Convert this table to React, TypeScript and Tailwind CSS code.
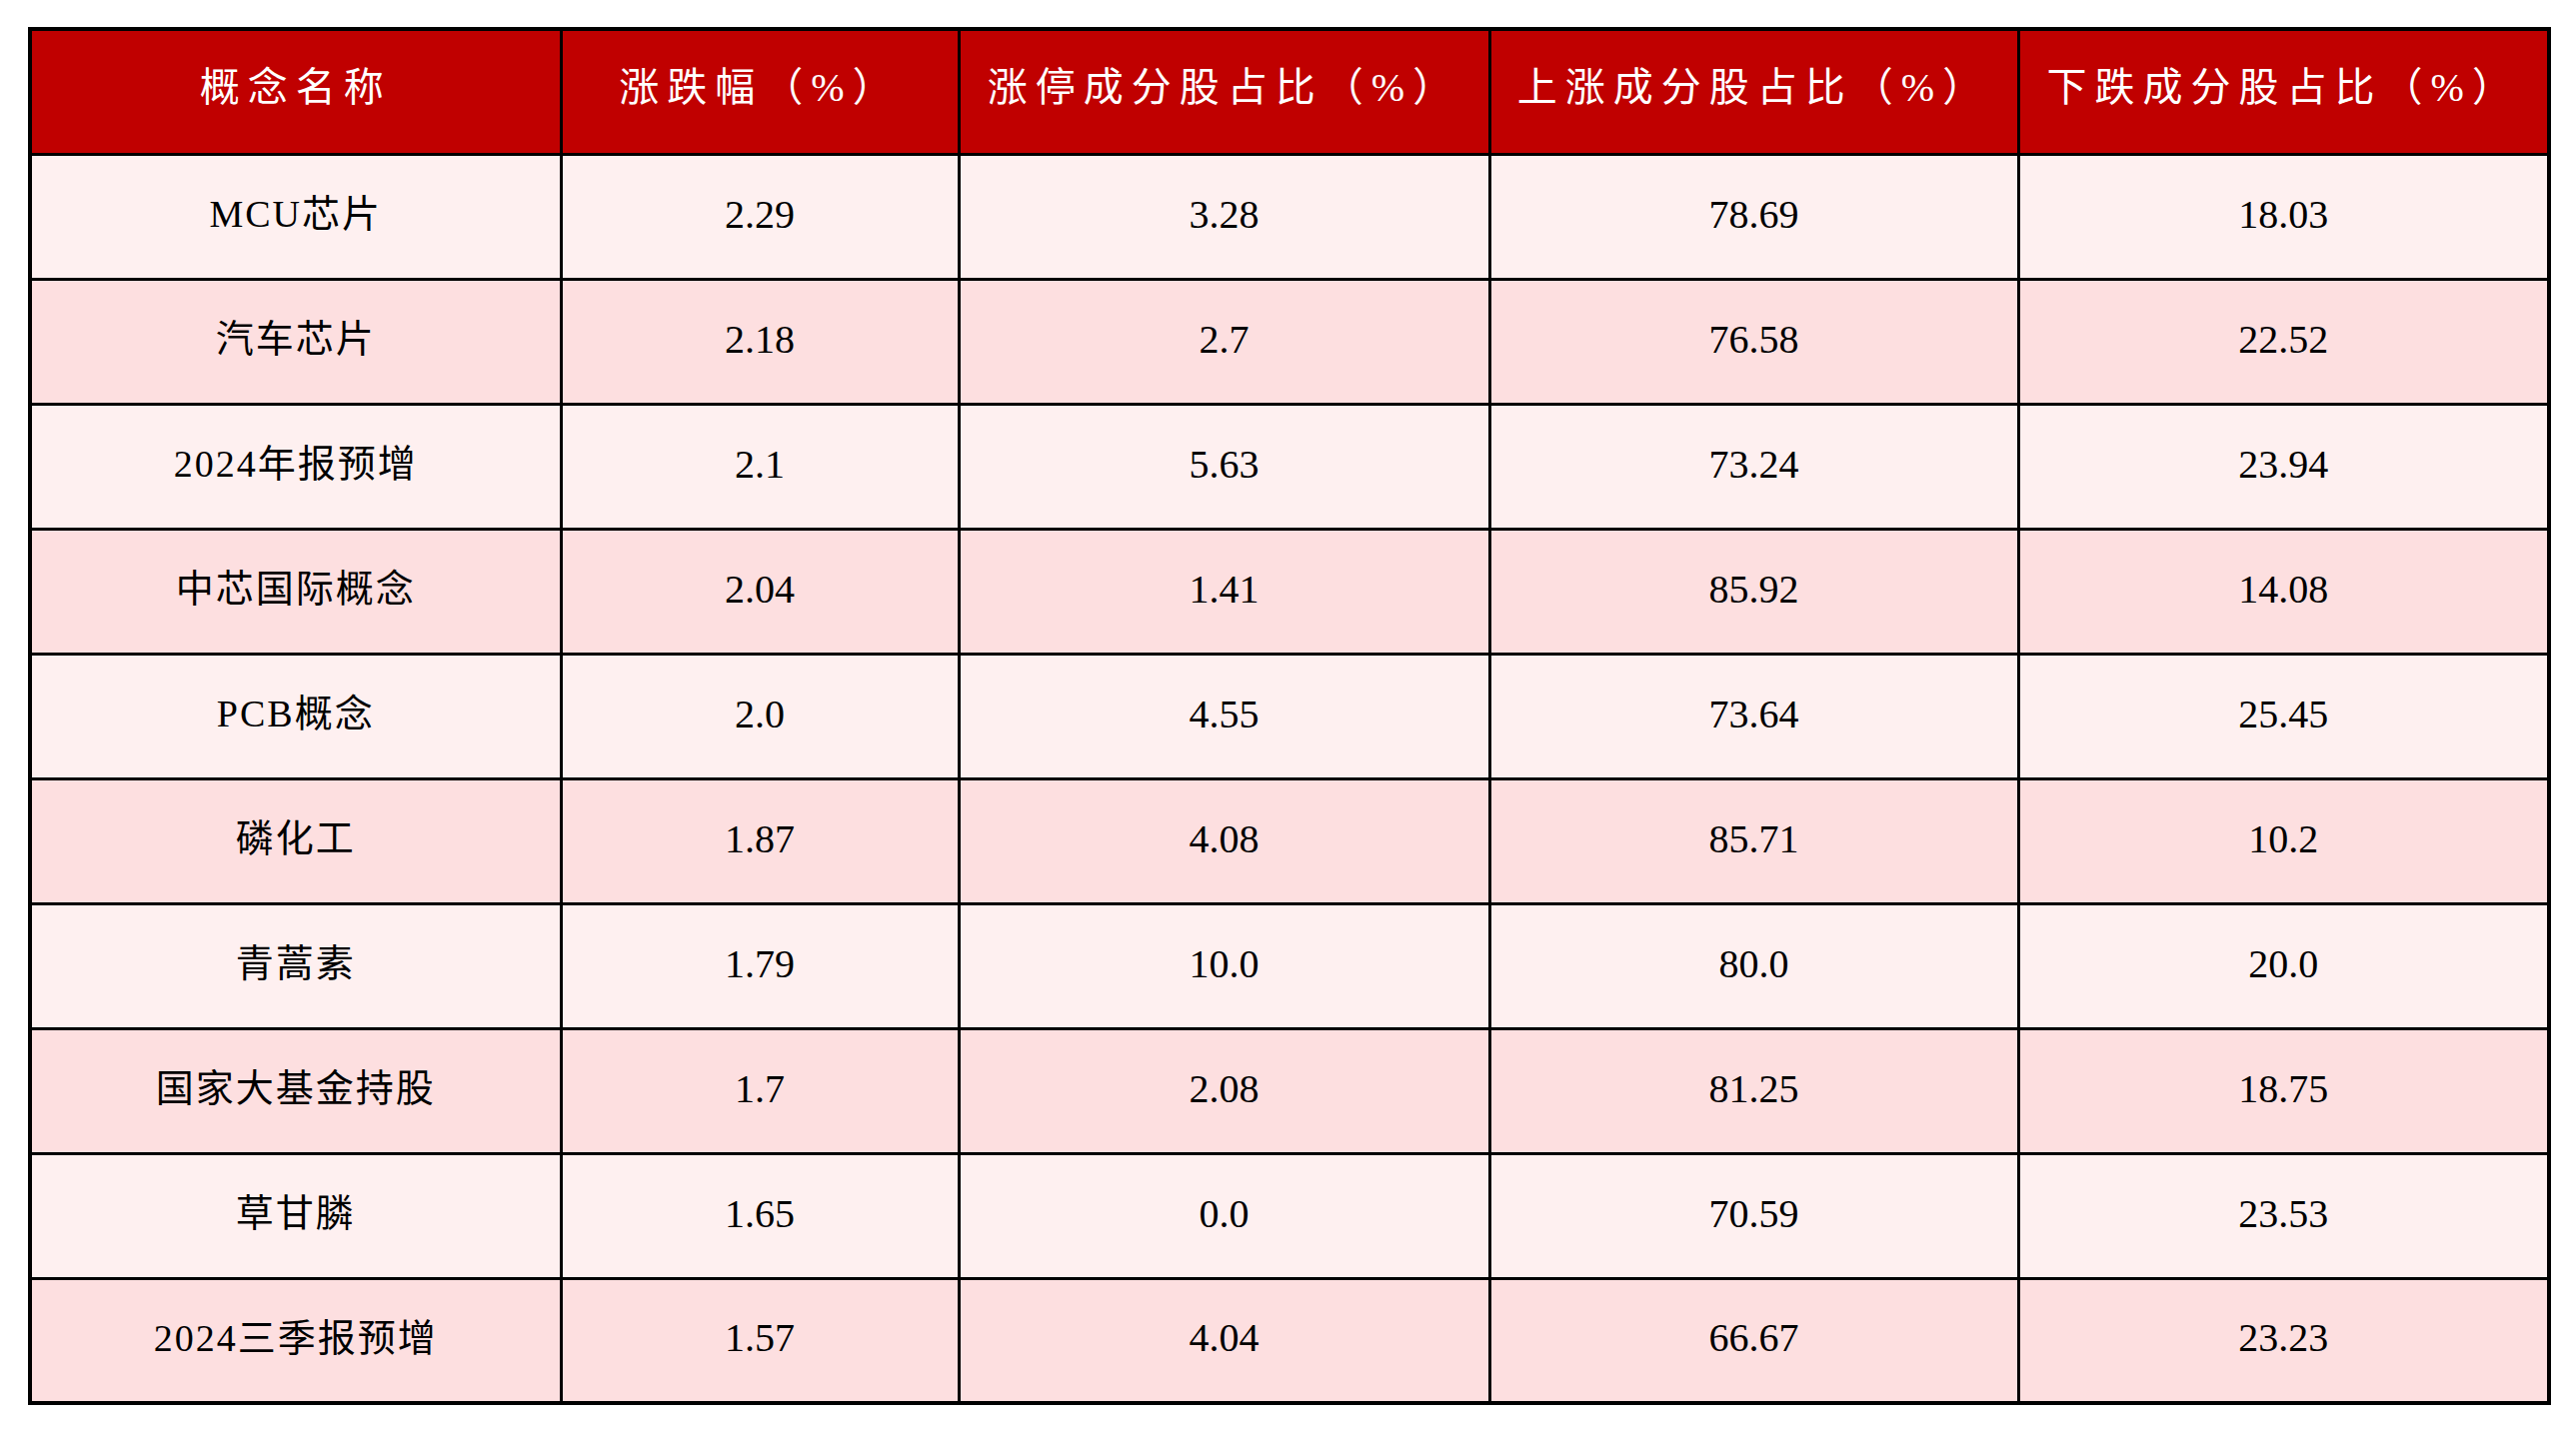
import React from "react";

const headers = [
  "概念名称",
  "涨跌幅（%）",
  "涨停成分股占比（%）",
  "上涨成分股占比（%）",
  "下跌成分股占比（%）",
];

const rows: string[][] = [
  ["MCU芯片", "2.29", "3.28", "78.69", "18.03"],
  ["汽车芯片", "2.18", "2.7", "76.58", "22.52"],
  ["2024年报预增", "2.1", "5.63", "73.24", "23.94"],
  ["中芯国际概念", "2.04", "1.41", "85.92", "14.08"],
  ["PCB概念", "2.0", "4.55", "73.64", "25.45"],
  ["磷化工", "1.87", "4.08", "85.71", "10.2"],
  ["青蒿素", "1.79", "10.0", "80.0", "20.0"],
  ["国家大基金持股", "1.7", "2.08", "81.25", "18.75"],
  ["草甘膦", "1.65", "0.0", "70.59", "23.53"],
  ["2024三季报预增", "1.57", "4.04", "66.67", "23.23"],
];

const widths = ["w-[531px]", "w-[398px]", "w-[531px]", "w-[529px]", "w-[531px]"];

export default function App() {
  return (
    <div
      className="min-h-screen bg-white pl-[28px] pt-[27px]"
      style={{ fontFamily: '"Liberation Serif", "Noto Sans CJK SC", serif' }}
    >
      <table className="border-collapse table-fixed border-[4px] border-black">
        <colgroup>
          {widths.map((w, i) => (
            <col key={i} className={w} />
          ))}
        </colgroup>
        <thead>
          <tr className="bg-[#c00000] h-[125px]">
            {headers.map((h, i) => (
              <th
                key={i}
                className="border-[3px] border-black text-white font-normal text-[40px] tracking-[8px] text-center align-middle p-0 pb-[8px]"
              >
                {h}
              </th>
            ))}
          </tr>
        </thead>
        <tbody>
          {rows.map((r, ri) => (
            <tr
              key={ri}
              className={
                ri % 2 === 0 ? "bg-[#fef0f0] h-[125px]" : "bg-[#fddfe0] h-[125px]"
              }
            >
              {r.map((c, ci) => (
                <td
                  key={ci}
                  className={
                    ci === 0
                      ? "border-[3px] border-black text-black text-[38px] tracking-[2px] text-center align-middle p-0 pb-[4px]"
                      : "border-[3px] border-black text-black text-[40px] text-center align-middle p-0 pb-[4px]"
                  }
                >
                  {c}
                </td>
              ))}
            </tr>
          ))}
        </tbody>
      </table>
    </div>
  );
}
